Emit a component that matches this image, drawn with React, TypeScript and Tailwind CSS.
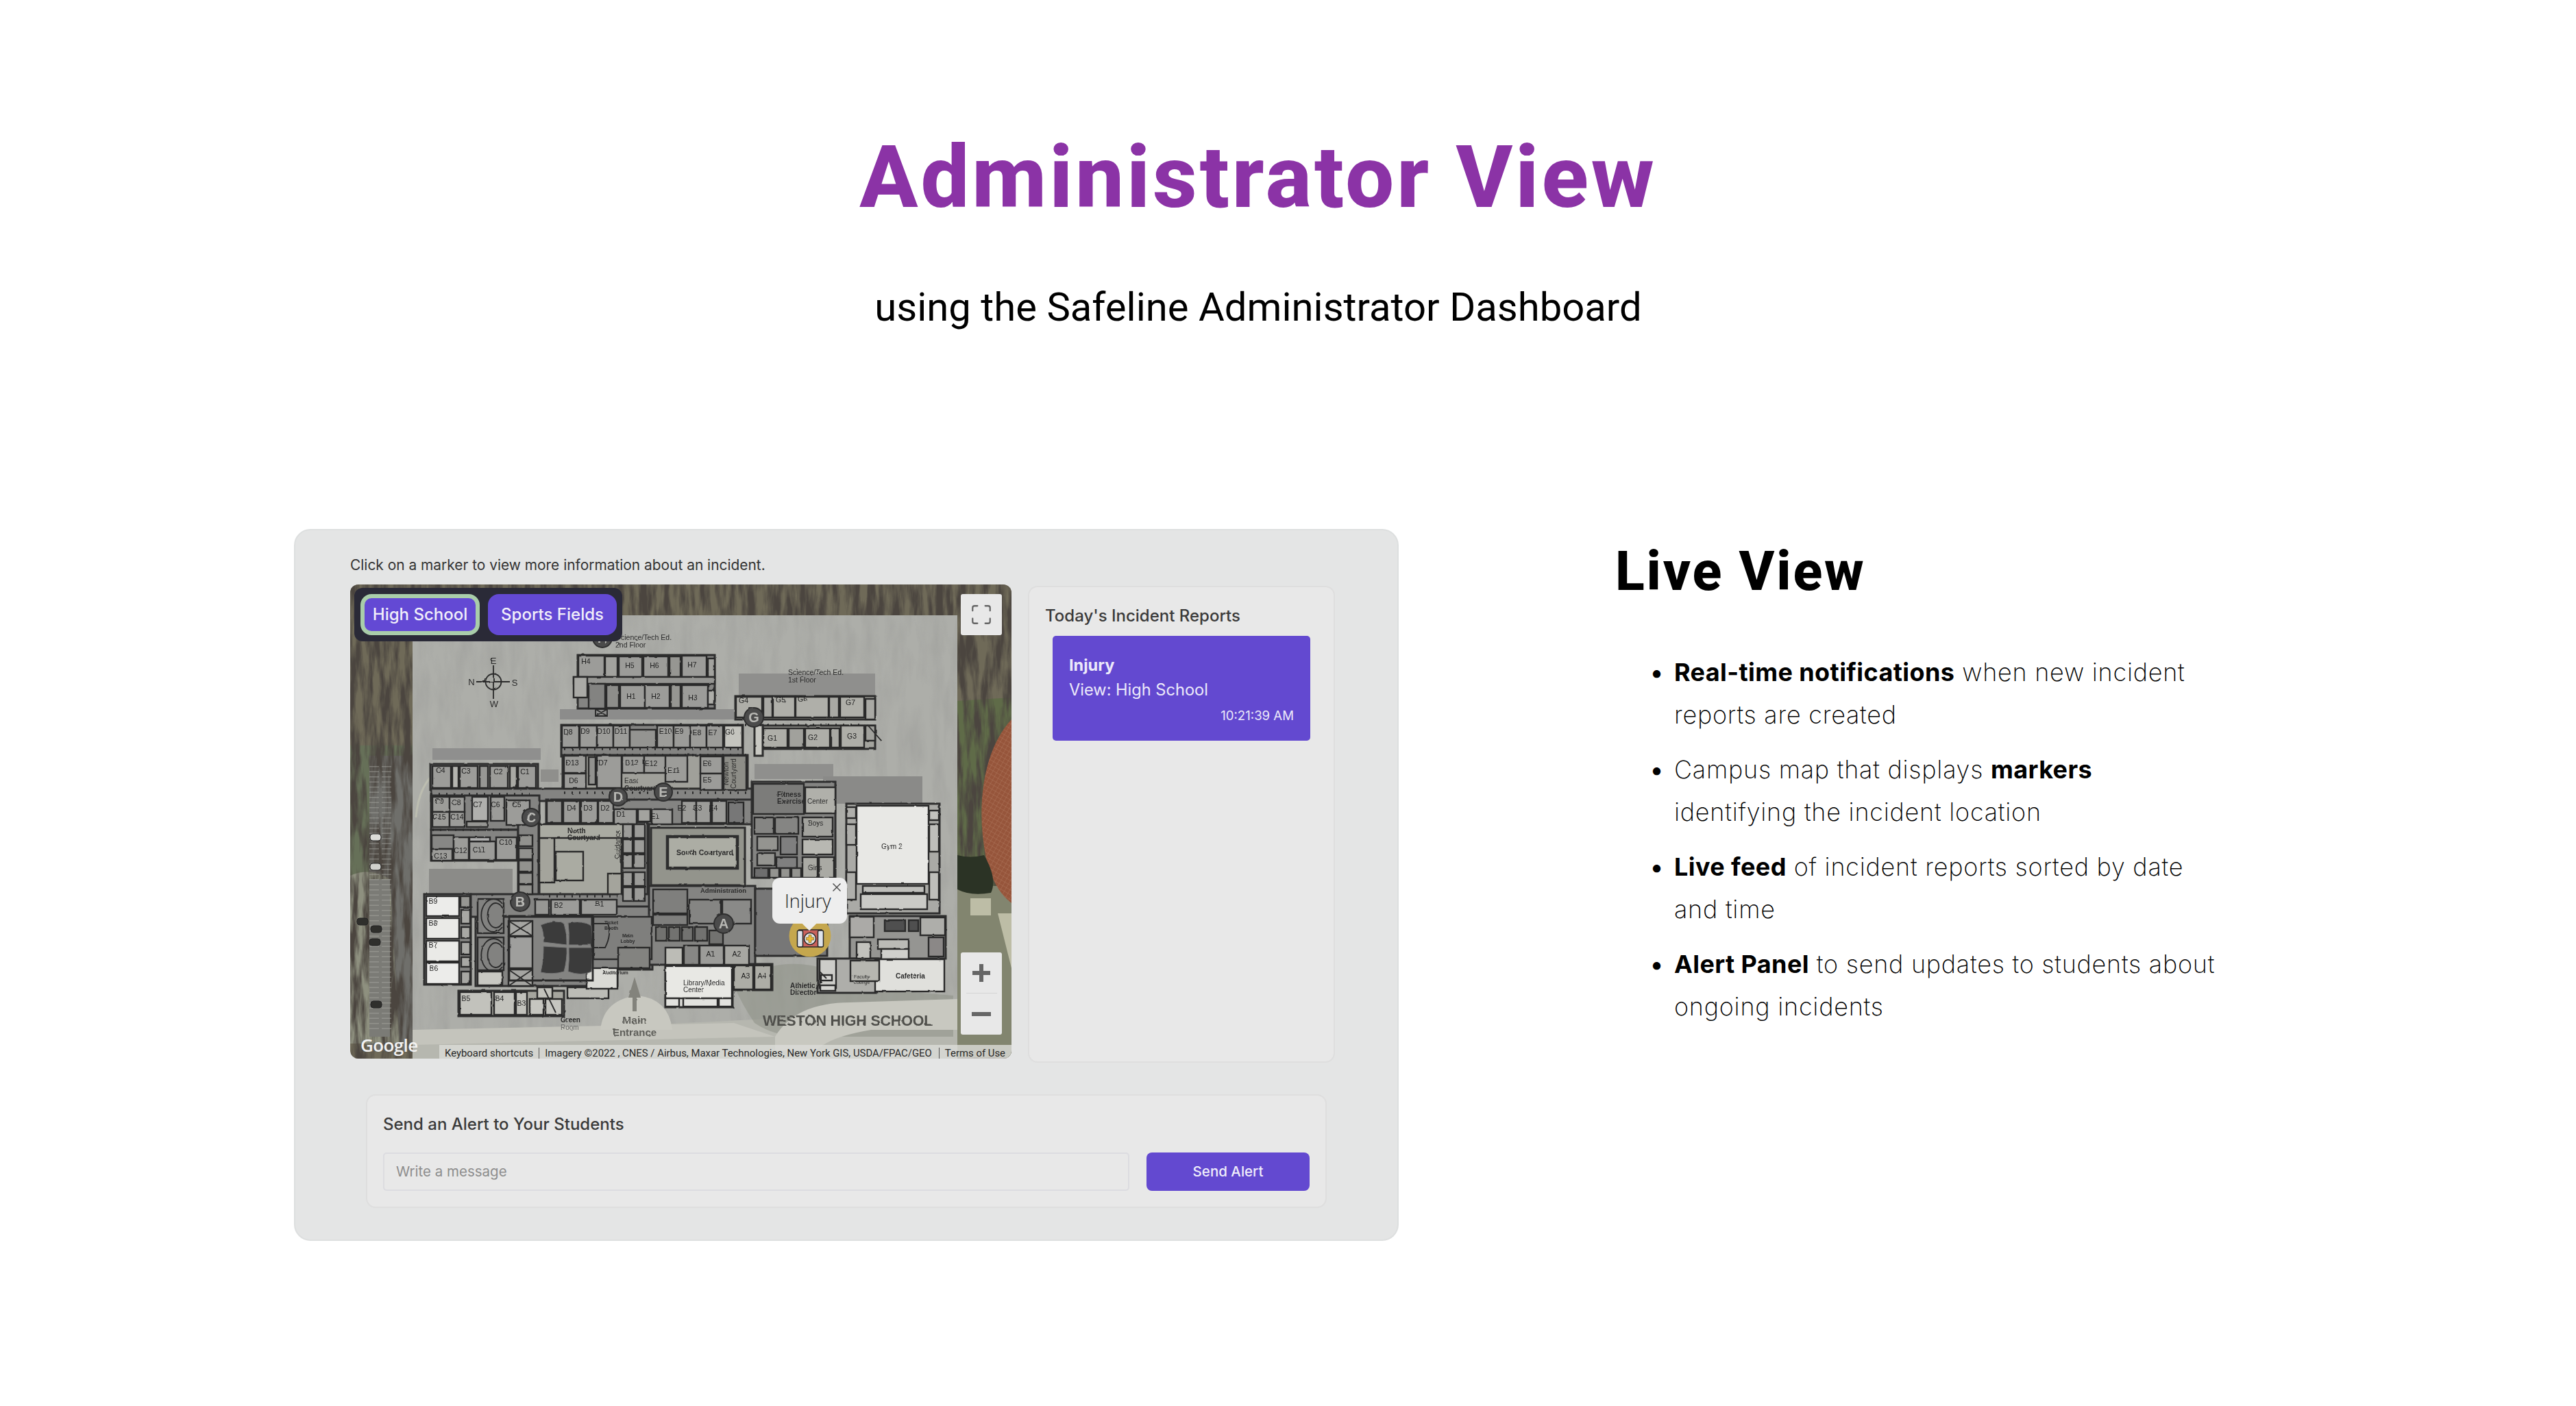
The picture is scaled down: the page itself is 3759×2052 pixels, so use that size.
import React from "react";
import { Maximize } from "lucide-react";

type Room = [number, number, number, number, string?];
type Label = [number, number, string];

const rooms: Room[] = [
  // H wing
  [333,104,38,31],[372,105,18,30,"#a2a29e"],[392,105,34,30],[428,105,36,30],[466,105,16,30,"#969692"],[484,104,36,31],[522,108,10,27,"#a2a29e"],
  [326,135,206,10,"#959592"],[326,135,20,30,"#aaaaa6"],[348,145,24,36,"#838381"],[374,147,18,33,"#8d8d8a"],[394,147,36,33],[430,147,36,33],[468,147,14,33,"#969692"],[484,147,38,33],[522,155,10,20,"#aeaea9"],
  // D / E top row
  [309,206,25,32],[335,206,25,32],[360,206,24,32],[384,206,24,32],[408,212,38,26,"#949491"],[448,206,24,32],[472,206,24,32],[496,206,24,32],[520,206,24,32],[546,206,26,32,"#c4c4be"],
  // second row
  [312,250,32,25],[312,276,32,22],[348,252,10,40,"#92928f"],[360,250,36,47],[397,250,32,25],[429,250,32,25],[460,250,32,38],[511,251,32,25],[511,276,32,24],[545,250,33,50,"#8d8d87"],
  // C block
  [120,265,27,32],[149,265,9,32,"#b5b5b0"],[160,265,26,32],[189,265,12,32,"#979794"],[204,265,26,32],[233,265,10,32,"#a9a9a4"],[245,265,26,32],
  [120,310,25,22],[145,310,22,22],[178,310,23,35,"#b0b0ad"],[205,310,20,35],[228,315,34,36],[120,332,25,22],[145,332,22,22],[170,346,30,8,"#969693"],
  // lower row of main corridor
  [311,316,24,32],[337,316,24,32],[362,316,22,32],[385,328,33,22],[440,328,30,22],[484,316,21,32],[505,316,21,32],[528,316,21,32],[552,318,22,30,"#777777"],[420,328,18,18,"#a3a39f"],
  [287,316,22,32,"#92928f"],
  // C lower
  [119,366,32,20,"#878785"],[119,386,30,17],[151,369,22,33],[174,375,38,27],[174,369,30,6,"#b0b0b0"],[213,369,30,33],[246,366,20,16,"#92928e"],[246,385,20,16,"#92928e"],[246,403,20,16,"#92928e"],[246,421,20,16,"#92928e"],[246,438,20,14,"#92928e"],
  // North courtyard
  [276,370,22,65,"#a4a49c"],[300,390,40,42,"#aaaba2"],[276,350,135,20,"#aaaba2"],
  [398,350,14,20],[414,350,16,20],[398,372,14,20],[414,372,16,20],[398,394,14,20],[414,394,16,20],[398,420,14,20],[414,420,16,20],[398,442,14,20],[414,442,16,20],[376,422,20,30,"#a4a49c"],
  // Admin cluster
  [442,445,50,35,"#7f7f7d"],[442,482,50,15,"#7f7f7d"],[495,460,46,35,"#858583"],[543,460,42,35,"#8a8a88"],[446,500,16,20,"#727270"],[465,500,16,20,"#727270"],[484,500,16,20,"#727270"],[503,500,18,20,"#727270"],[524,505,20,20,"#727270"],
  [460,530,25,25,"#bcbcb6"],[487,527,22,28,"#878785"],[510,527,35,28],[546,527,36,28,"#a7a7a2"],[560,556,28,35,"#adada6"],[590,556,24,35,"#adada6"],
  // Fitness / locker cluster
  [588,291,74,44,"#7c7c7a"],[664,296,44,38,"#b0b0aa"],[590,340,28,24,"#858583"],[620,340,34,24,"#858583"],[660,340,44,28,"#a2a29d"],[594,368,30,20,"#949490"],[628,368,24,26,"#7f7f7f"],[660,372,44,22,"#b8b8b2"],[594,392,26,18,"#949490"],[622,398,30,16,"#7f7f7f"],[660,398,22,30,"#aaaaa4"],[684,398,22,30,"#aaaaa4"],[590,414,20,14,"#6e6e6e"],[612,414,14,14,"#949490"],[628,414,14,14,"#949490"],[644,414,14,14,"#949490"],
  // B rooms
  [111,455,48,29,"#ececea"],[111,487,48,30,"#eaeae7"],[111,520,48,30,"#eaeae7"],[111,552,48,31,"#ececea"],[161,455,14,16,"#979793"],[162,475,13,20,"#a8a8a4"],[162,500,13,16,"#a8a8a4"],[162,522,13,18,"#a8a8a4"],[162,544,13,14,"#a8a8a4"],[162,565,13,18,"#a8a8a4"],
  [186,459,38,50,"#828280"],[186,515,38,48,"#828280"],[186,565,36,20,"#c8c8c2"],
  [231,491,35,22,"#a5a5a2"],[231,514,35,46,"#9f9f9d"],[231,562,35,24,"#a5a5a2"],
  [293,460,42,22],[337,460,52,22],[270,460,20,22,"#979794"],
  // Theatre lobby
  [355,485,85,62,"#7f7f7d"],[391,530,46,30,"#838380"],
  [317,588,60,16,"#bcbcb6"],[345,560,45,30,"#dadad5"],
  // Bottom B
  [160,595,46,33,"#c2c2bc"],[210,595,30,33,"#c2c2bc"],[242,595,16,33,"#c2c2bc"],[262,605,20,23,"#c6c6c0"],[285,605,24,23,"#c6c6c0"],[273,588,22,16,"#c2c2bc"],
  // Library
  [460,557,97,47,"#e8e8e4"],[460,604,20,12,"#e2e2de"],[486,604,50,12,"#e2e2de"],[538,604,19,12,"#e2e2de"],
  // Gym
  [739,323,105,114,"#e8e8e5"],[845,330,14,14,"#c2c2be"],[845,350,14,40,"#bebeba"],[845,420,14,40,"#bebeba"],[724,325,14,16,"#afafab"],[724,350,14,30,"#afafab"],[724,420,14,40,"#afafab"],
  [748,440,90,10,"#bfbfbb"],[745,452,97,22,"#cacac6"],
  // Kitchen cluster
  [729,485,35,30,"#abaaa7"],[780,490,30,16,"#4f4f4f"],[815,490,14,16,"#4f4f4f"],[832,486,36,26,"#aeaeaa"],[739,522,20,24,"#c2c2bd"],[770,518,45,14,"#bbbbb6"],[775,532,40,15,"#d0d0cc"],[844,515,22,28,"#8b8887"],
  [766,547,101,47,"#e0e0dc"],
  [730,549,42,30,"#b6b6b0"],[685,547,24,42,"#cdcdc9"],[686,585,22,8,"#d4d4d0"],[687,570,16,8,"#d4d4d0"],
  // G wing
  [563,164,38,30,"#aeaea8"],[603,164,13,30,"#a9a9a4"],[617,164,32,30,"#afafa9"],[650,164,48,30,"#afafa9"],[699,164,14,30,"#a9a9a4"],[715,164,35,30,"#afafa9"],[752,167,14,30,"#a9a9a4"],
  [603,210,35,28,"#aeaea8"],[640,210,22,28,"#a1a19c"],[664,210,36,28,"#aeaea8"],[702,210,12,28,"#a9a9a4"],[716,206,34,32,"#aeaea8"],[752,206,14,22,"#a1a19c"],
];

const labels: Label[] = [
  [344,116,"H4"],[408,122,"H5"],[444,122,"H6"],[499,121,"H7"],[410,167,"H1"],[446,167,"H2"],[500,169,"H3"],
  [318,219,"D8"],[343,218,"D9"],[370,218,"D10"],[395,218,"D11"],[460,218,"E10"],[480,218,"E9"],[506,220,"E8"],[529,220,"E7"],[554,219,"G0"],
  [324,264,"D13"],[326,290,"D6"],[369,264,"D7"],[411,264,"D12"],[439,265,"E12"],[472,275,"E11"],[521,265,"E6"],[521,289,"E5"],
  [132,275,"C4"],[169,276,"C3"],[216,277,"C2"],[255,277,"C1"],[130,320,"C9"],[155,322,"C8"],[186,325,"C7"],[212,325,"C6"],[243,325,"C5"],[130,343,"C15"],[156,343,"C14"],
  [323,330,"D4"],[347,330,"D3"],[372,330,"D2"],[395,339,"D1"],[445,342,"E1"],[484,330,"E2"],[507,330,"E3"],[530,330,"E4"],
  [132,400,"C13"],[161,392,"C12"],[188,391,"C11"],[227,380,"C10"],
  [121,466,"B9"],[121,498,"B8"],[121,530,"B7"],[122,564,"B6"],[304,472,"B2"],[364,470,"B1"],[169,608,"B5"],[218,608,"B4"],[250,615,"B3"],
  [526,543,"A1"],[564,543,"A2"],[577,575,"A3"],[601,575,"A4"],
  [574,173,"G4"],[628,172,"G5"],[660,171,"G6"],[730,176,"G7"],[616,228,"G1"],[675,227,"G2"],[732,225,"G3"],
];

const circles: [number, number, string, number][] = [
  [391,310,"D",13],[457,303,"E",13],[264,340,"C",13],[589,194,"G",14],[248,463,"B",14],[545,495,"A",14],[368,78,"H",14],
];

const cars: [number, number, string][] = [
  [37,369,"#dcdcd8"],[37,412,"#d0d0cc"],[18,492,"#2f2f2c"],[38,503,"#2f2f2c"],[36,522,"#2f2f2c"],[38,613,"#2f2f2c"],
];

function PlanSvg() {
  return (
    <svg viewBox="0 0 965 692" className="block w-[965px] h-[692px]">
      <defs>
        <filter id="trees" x="0" y="0" width="100%" height="100%">
          <feTurbulence type="fractalNoise" baseFrequency="0.09 0.014" numOctaves="4" seed="7" />
          <feColorMatrix values="0 0 0 0 0.07  0 0 0 0 0.06  0 0 0 0 0.05  3.4 0 0 0 -1.25" />
        </filter>
        <filter id="grain" x="0" y="0" width="100%" height="100%">
          <feTurbulence type="fractalNoise" baseFrequency="0.06 0.015" numOctaves="3" seed="3" />
          <feColorMatrix values="0 0 0 0 0.3  0 0 0 0 0.3  0 0 0 0 0.29  1.2 0 0 0 -0.45" />
        </filter>
        <filter id="rough" x="-2%" y="-2%" width="104%" height="104%">
          <feTurbulence type="fractalNoise" baseFrequency="0.09" numOctaves="2" seed="11" result="n" />
          <feDisplacementMap in="SourceGraphic" in2="n" scale="2.2" result="d" />
          <feGaussianBlur in="d" stdDeviation="0.4" />
        </filter>
        <pattern id="track" width="6" height="6" patternUnits="userSpaceOnUse" patternTransform="rotate(30)">
          <rect width="6" height="6" fill="#96553b" />
          <path d="M0 0H6M0 0V6" stroke="#b38067" strokeWidth="0.7" />
        </pattern>
      </defs>

      {/* satellite */}
      <rect width="965" height="692" fill="#6f6a58" />
      <rect x="0" y="235" width="91" height="190" fill="#667058" />
      <rect x="28" y="250" width="63" height="430" fill="#6f6f6b" />
      <path d="M0 425Q30 412 58 430L72 670L0 670Z" fill="#8e907f" />
      <path d="M886 170L965 165V690H886Z" fill="#5f6b48" />
      <rect width="965" height="692" filter="url(#trees)" />
      <path d="M886 440H965V690H886Z" fill="#82856f" />
      <path d="M965 197C925 240 912 320 928 400C936 432 948 452 965 465Z" fill="url(#track)" />
      <path d="M886 395Q905 400 925 395Q945 430 935 450Q905 455 886 445Z" fill="#2b3325" />
      <rect x="905" y="458" width="30" height="25" fill="#bdbda6" />
      <path d="M945 480Q955 520 965 560V480Z" fill="#bdbda6" />
      <rect x="28" y="430" width="30" height="230" fill="#7b7b76" />
      <path d="M35 265V650M53 265V650" stroke="#aeaea8" strokeWidth="14" strokeDasharray="1.5 6" opacity="0.45" />
      {cars.map(([x, y, c], i) => (
        <rect key={i} x={x - 8} y={y - 5} width="16" height="10" rx="4" fill={c} stroke="#222" strokeWidth="1" />
      ))}

      {/* overlay */}
      <rect x="91" y="45" width="795" height="647" fill="#adaea9" />
      <rect x="91" y="45" width="795" height="647" filter="url(#grain)" opacity="0.6" />
      <path d="M91 660L886 620V692H91Z" fill="#b6b7af" />
      <path d="M560 585Q640 520 760 590L880 600V660H660Q620 660 590 640Q570 610 560 585Z" fill="#8e9186" opacity="0.55" />
      <path d="M620 660Q650 610 730 610L886 605V650H760Q700 660 680 680H620Z" fill="#c8c8c0" />
      <path d="M91 650L560 640L620 660L91 672Z" fill="#c4c4bc" />
      <path d="M365 650Q370 605 420 600Q465 605 470 650Z" fill="#c8c8c0" />
      <path d="M96 340Q100 290 130 270" fill="none" stroke="#bcbdb0" strokeWidth="3" />
      <rect x="120" y="239" width="158" height="17" fill="#8f8f8e" />
      <rect x="306" y="182" width="254" height="15" fill="#8c8c8b" />
      <rect x="567" y="130" width="199" height="33" fill="#8f8f8d" />
      <rect x="590" y="262" width="115" height="22" fill="#8f8f8d" />
      <rect x="690" y="280" width="145" height="40" fill="#8a8a88" />
      <rect x="115" y="415" width="122" height="40" fill="#8b8b88" />
      <rect x="278" y="270" width="26" height="18" fill="#8f8f8c" />

      <g filter="url(#rough)">
        {/* building mass */}
        <g fill="#848482" stroke="#2f2f2f" strokeWidth="3">
          <rect x="332" y="103" width="200" height="78" />
          <rect x="308" y="205" width="265" height="46" />
          <rect x="310" y="249" width="270" height="55" fill="#a0a09a" />
          <rect x="117" y="262" width="157" height="38" />
          <rect x="118" y="298" width="470" height="18" />
          <rect x="118" y="308" width="158" height="50" />
          <rect x="286" y="314" width="302" height="36" />
          <rect x="118" y="358" width="127" height="45" />
          <rect x="245" y="347" width="30" height="110" />
          <rect x="276" y="350" width="160" height="110" fill="#a6a79f" />
          <rect x="396" y="347" width="38" height="125" />
          <rect x="108" y="452" width="68" height="132" />
          <rect x="183" y="456" width="207" height="130" />
          <rect x="176" y="452" width="290" height="33" />
          <rect x="353" y="470" width="88" height="92" />
          <rect x="436" y="440" width="155" height="115" />
          <rect x="591" y="444" width="105" height="98" fill="#777777" />
          <rect x="586" y="288" width="122" height="140" />
          <rect x="562" y="163" width="204" height="34" fill="#a4a49e" />
          <rect x="602" y="206" width="164" height="34" fill="#a4a49e" />
          <rect x="590" y="205" width="12" height="45" fill="#c8c8c2" />
          <rect x="724" y="320" width="136" height="160" fill="#aaaaa6" />
          <rect x="729" y="484" width="140" height="62" fill="#959592" />
          <rect x="682" y="546" width="88" height="50" fill="#aeaeaa" />
          <rect x="158" y="593" width="154" height="37" fill="#a5a59e" />
          <rect x="558" y="554" width="58" height="38" fill="#adada6" />
          <rect x="460" y="555" width="98" height="62" fill="#dadad6" />
        </g>

        {/* courtyard */}
        <g fill="none" stroke="#2f2f2f">
          <rect x="439" y="355" width="137" height="84" strokeWidth="3" fill="#93948c" />
          <rect x="463" y="368" width="102" height="46" strokeWidth="4.5" fill="#acada4" />
        </g>

        {/* rooms */}
        <g stroke="#2b2b2b" strokeWidth="2.4">
          {rooms.map((r, i) => (
            <rect key={i} x={r[0]} y={r[1]} width={r[2]} height={r[3]} fill={r[4] ?? "#9c9c99"} />
          ))}
        </g>

        {/* door ticks */}
        <path d="M118 306H262M312 240H570M312 304H585M312 249H580M120 358H240M290 455H390M565 205H750" stroke="#2b2b2b" strokeWidth="3.5" strokeDasharray="2 9" fill="none" />

        {/* theatre */}
        <g fill="#3a3a3a" stroke="#777" strokeWidth="1">
          <path d="M278 497Q300 488 312 495Q317 510 316 526L282 522Q283 508 278 497Z" />
          <path d="M318 494Q340 490 352 498L354 526L319 526Q320 508 318 494Z" />
          <path d="M282 528L316 530Q317 546 312 565Q295 570 278 566Q283 546 282 528Z" />
          <path d="M319 530L354 530L352 565Q338 572 318 565Q320 548 319 530Z" />
        </g>
        <g stroke="#2b2b2b" strokeWidth="1.8" fill="none">
          <path d="M231 491L266 513M266 491L231 513M231 562L266 586M266 562L231 586" />
          <path d="M232 484H354V578H232Z" strokeWidth="2.8" />
          <path d="M222 472A12 18 0 1 0 222 494M222 466A18 24 0 1 0 222 500" />
          <path d="M222 530A12 18 0 1 0 222 552M222 524A18 24 0 1 0 222 558" />
          <path d="M358 182H375V192H358ZM358 182L375 192M375 182L358 192" />
          <path d="M354 495H376Q382 510 372 530H354" />
          <path d="M300 625L283 590" />
          <path d="M685 565L695 575M755 205L775 228M688 578L680 590" />
        </g>

        {/* compass */}
        <g stroke="#2a2a2a" strokeWidth="1.8" fill="none">
          <circle cx="209" cy="142" r="11.5" />
          <path d="M184 142H233M209 118V167" />
        </g>
        <g fontFamily="'Liberation Sans', sans-serif" fontSize="13" fill="#2a2a2a" textAnchor="middle">
          <text x="209" y="116">E</text>
          <text x="177" y="147">N</text>
          <text x="240" y="148">S</text>
          <text x="210" y="179">W</text>
        </g>

        {/* arrow + main entrance */}
        <path d="M415 573L424 603H418V623H412V603H406Z" fill="#83837c" />
        <g fontFamily="'Liberation Sans', sans-serif" fontWeight="700" fill="#5f5f5a" textAnchor="middle">
          <text x="415" y="641" fontSize="15.5">Main</text>
          <text x="415" y="659" fontSize="15">Entrance</text>
        </g>
        <text x="602" y="644" fontFamily="'Liberation Sans', sans-serif" fontWeight="700" fontSize="21.5" fill="#4f4f4b" letterSpacing="0.6" textLength="249">WESTON HIGH SCHOOL</text>

        {/* room labels */}
        <g fontFamily="'Liberation Sans', sans-serif" fontSize="10.5" fill="#222222" textAnchor="middle">
          {labels.map((l, i) => (
            <text key={i} x={l[0]} y={l[1]}>{l[2]}</text>
          ))}
        </g>
        <g fontFamily="'Liberation Sans', sans-serif" fontSize="10" fill="#2b2b2b">
          <text x="639" y="132" fontSize="10.5">Science/Tech Ed.</text>
          <text x="639" y="143" fontSize="10.5">1st Floor</text>
          <text x="388" y="81" fontSize="10.5">Science/Tech Ed.</text>
          <text x="387" y="92" fontSize="10.5">2nd Floor</text>
          <text x="317" y="363" fontWeight="700">North</text>
          <text x="317" y="373" fontWeight="700">Courtyard</text>
          <text x="400" y="290">East</text>
          <text x="400" y="301" fontWeight="700">Courtyard</text>
          <text x="476" y="395" fontSize="10.5" fontWeight="700">South Courtyard</text>
          <text x="511" y="450" fontSize="9.5" fontWeight="700">Administration</text>
          <text x="623" y="310" fontWeight="700">Fitness</text>
          <text x="623" y="320" fontWeight="700">Exercise</text>
          <text x="667" y="320">Center</text>
          <text x="775" y="386" fontSize="10.5">Gym 2</text>
          <text x="796" y="575" fontSize="10" fontWeight="700">Cafeteria</text>
          <text x="486" y="585">Library/Media</text>
          <text x="486" y="595">Center</text>
          <text x="642" y="589" fontWeight="700">Athletic</text>
          <text x="642" y="599" fontWeight="700">Director</text>
          <text x="307" y="639" fontWeight="700">Green</text>
          <text x="307" y="650" fill="#666666">Room</text>
          <text x="668" y="352">Boys</text>
          <text x="668" y="417">Girls</text>
          <text x="735" y="575" fontSize="7">Faculty</text>
          <text x="735" y="583" fontSize="7">Lounge</text>
          <text x="405" y="515" fontSize="7" fontWeight="700" textAnchor="middle">Main</text>
          <text x="405" y="523" fontSize="7" fontWeight="700" textAnchor="middle">Lobby</text>
          <text x="381" y="496" fontSize="7" fontWeight="700" textAnchor="middle">Ticket</text>
          <text x="381" y="504" fontSize="7" fontWeight="700" textAnchor="middle">Booth</text>
          <text x="387" y="569" fontSize="7" fontWeight="700" textAnchor="middle">Auditorium</text>
          <text transform="translate(394 401) rotate(-90)" fontSize="10">Guidance</text>
          <text transform="translate(552 293) rotate(-90)" fontSize="10">Newton</text>
          <text transform="translate(563 298) rotate(-90)" fontSize="10">Courtyard</text>
        </g>

        {/* section circles */}
        {circles.map(([x, y, t, r]) => (
          <g key={t}>
            <circle cx={x} cy={y} r={r} fill="#4b4b4b" stroke="#2f2f2f" strokeWidth="2" />
            <text x={x} y={y + 7} textAnchor="middle" fontSize="20" fontWeight="700" fill="#b8b8b4" fontFamily="'Liberation Sans', sans-serif">{t}</text>
          </g>
        ))}
      </g>

      {/* marker */}
      <circle cx="671" cy="513" r="30.5" fill="#c5a74e" />
      <rect x="655" y="504" width="33" height="25" fill="#c9625c" stroke="#2a2a2a" strokeWidth="1.5" />
      <rect x="652.5" y="505" width="8" height="24" rx="2" fill="#dfe3ea" stroke="#2a2a2a" strokeWidth="1.5" />
      <rect x="682.5" y="505" width="8" height="24" rx="2" fill="#dfe3ea" stroke="#2a2a2a" strokeWidth="1.5" />
      <circle cx="671" cy="517" r="8.5" fill="#e7e7e7" stroke="#2a2a2a" strokeWidth="1.5" />
      <path d="M669 511.5H673V515H676.5V519H673V522.5H669V519H665.5V515H669Z" fill="#e9b93a" stroke="#6b5620" strokeWidth="0.6" />
    </svg>
  );
}

const inter = "font-['Inter',sans-serif]";

function MapView() {
  return (
    <div className="relative w-[965px] h-[692px] shrink-0 overflow-hidden rounded-[12px]">
      <PlanSvg />

      <div className="absolute left-[6px] top-[5px] flex h-[78px] items-center gap-[12px] rounded-[12px] bg-[#2a2a37] pl-[9px] pr-[8px]">
        <button className={`flex h-[60px] w-[174px] items-center justify-center rounded-[16px] border-[6px] border-[#a9cdaa] bg-[#6349d4] text-[24px] font-medium text-[#f1effa] ${inter}`}>High School</button>
        <button className={`flex h-[60px] w-[188px] items-center justify-center rounded-[16px] bg-[#6349d4] text-[24px] font-medium text-[#f1effa] ${inter}`}>Sports Fields</button>
      </div>

      <div className="absolute left-[891px] top-[14px] flex h-[60px] w-[60px] items-center justify-center rounded-[3px] bg-[#e8e8e8]">
        <Maximize className="h-[34px] w-[34px] text-[#666666]" strokeWidth={1.6} />
      </div>

      <div className="absolute left-[891px] top-[537px] flex h-[120px] w-[60px] flex-col items-center rounded-[3px] bg-[#e8e8e8]">
        <div className="flex h-[59px] items-center justify-center">
          <svg width="28" height="28" viewBox="0 0 28 28"><path d="M11 1H17V11H27V17H17V27H11V17H1V11H11Z" fill="#666666" /></svg>
        </div>
        <div className="h-px w-[45px] bg-[#d5d5d5]" />
        <div className="flex h-[60px] items-center justify-center">
          <svg width="28" height="6" viewBox="0 0 28 6"><rect width="28" height="6" fill="#666666" /></svg>
        </div>
      </div>

      <div className="absolute left-[616px] top-[428px] h-[67px] w-[109px] rounded-[11px] bg-[#eeeeee]">
        <span className="absolute left-[18px] top-[17px] font-['Open_Sans',sans-serif] text-[27px] font-light leading-[34px] text-[#222222]">Injury</span>
        <svg className="absolute right-[8px] top-[7px]" width="14" height="14" viewBox="0 0 14 14"><path d="M1.5 1.5L12.5 12.5M12.5 1.5L1.5 12.5" stroke="#444444" strokeWidth="1.4" /></svg>
        <div className="absolute left-[46px] top-[58px] h-[16px] w-[16px] rotate-45 bg-[#eeeeee]" />
      </div>

      <span className="absolute left-[15px] top-[653px] font-['Open_Sans',sans-serif] text-[26px] font-semibold leading-[38px] tracking-[-0.6px] text-[#f2f2f2]">Google</span>

      <div className="absolute bottom-0 left-[130px] right-0 flex h-[20px] items-center bg-[#dcdcd8]/80 pt-[4px] font-['Roboto',sans-serif] text-[14.9px] leading-[16px] text-[#2a2a2a]">
        <span className="pl-[8px] pr-[8px]">Keyboard shortcuts</span>
        <span className="h-full w-px bg-[#555555]" />
        <span className="grow pl-[8px]">Imagery ©2022 , CNES / Airbus, Maxar Technologies, New York GIS, USDA/FPAC/GEO</span>
        <span className="h-full w-px bg-[#555555]" />
        <span className="pl-[8px] pr-[9px]">Terms of Use</span>
      </div>
    </div>
  );
}

function Dashboard() {
  return (
    <div className={`h-[1039px] w-[1612px] shrink-0 rounded-[24px] border-2 border-[#dddfdf] bg-[#e4e5e5] pt-[38px] ${inter}`}>
      <p className="ml-[80px] mb-[15px] text-[20.9px] leading-[26px] text-[#333333]">Click on a marker to view more information about an incident.</p>
      <div className="ml-[80px] flex gap-[24px]">
        <MapView />
        <div className="mt-[2px] h-[696px] w-[448px] rounded-[14px] border-2 border-[#dedede] bg-[#e8e8e8]">
          <h3 className="ml-[23px] mt-[27px] text-[24px] font-medium leading-[30px] text-[#3a3a3a]">Today's Incident Reports</h3>
          <div className="ml-[34px] mt-[14px] h-[153px] w-[376px] rounded-[5px] bg-[#6349d0] pl-[24px] pr-[24px] pt-[25px] text-[#ece9fa]">
            <p className="text-[23.5px] font-bold leading-[36px]">Injury</p>
            <p className="text-[23.6px] leading-[36px]">View: High School</p>
            <p className="mt-[4px] text-right text-[18.6px] leading-[30px]">10:21:39 AM</p>
          </div>
        </div>
      </div>
      <div className="ml-[103px] mt-[46px] h-[166px] w-[1402px] rounded-[14px] border-2 border-[#dedede] bg-[#e8e8e8] px-[23px]">
        <h3 className="pt-[27px] text-[24px] font-medium leading-[30px] text-[#3a3a3a]">Send an Alert to Your Students</h3>
        <div className="mt-[26px] flex gap-[25px]">
          <div className="flex h-[56px] w-[1089px] items-center rounded-[5px] border-2 border-[#dcdce0] bg-[#e8e8e8] px-[17px] text-[20.5px] text-[#8d8d8d]">Write a message</div>
          <button className="h-[56px] w-[238px] rounded-[8px] bg-[#6349d0] text-[20.5px] font-medium text-[#f0eefb]">Send Alert</button>
        </div>
      </div>
    </div>
  );
}

const bullets: React.ReactNode[] = [
  <><b>Real-time notifications</b> when new incident<br />reports are created</>,
  <>Campus map that displays <b>markers</b><br />identifying the incident location</>,
  <><b>Live feed</b> of incident reports sorted by date<br />and time</>,
  <><b>Alert Panel</b> to send updates to students about<br />ongoing incidents</>,
];

export default function App() {
  return (
    <div className="h-[2052px] w-[3759px] overflow-hidden bg-white">
      <header className="flex w-[3672px] flex-col items-center pt-[196px]">
        <h1 className="font-['Roboto',sans-serif] text-[126px] font-extrabold leading-[126px] tracking-[4px] text-[#8b33a6]">Administrator View</h1>
        <p className="mt-[97px] font-['Roboto',sans-serif] text-[58px] leading-[58px] text-black">using the Safeline Administrator Dashboard</p>
      </header>
      <main className="mt-[295px] flex pl-[429px]">
        <Dashboard />
        <section className="ml-[316px] pt-[23px]">
          <h2 className="font-['Roboto',sans-serif] text-[79px] font-extrabold leading-[79px] tracking-[2.8px] text-black">Live View</h2>
          <ul className="mt-[76px] flex flex-col gap-[18px] font-['Inter',sans-serif] text-[36px] font-[250] leading-[62px] tracking-[0.75px] text-black [&_b]:font-bold [&_b]:tracking-[0.4px]">
            {bullets.map((b, i) => (
              <li key={i} className="flex">
                <span className="w-[86px] pl-[52px] font-bold">•</span>
                <span className="whitespace-nowrap">{b}</span>
              </li>
            ))}
          </ul>
        </section>
      </main>
    </div>
  );
}
